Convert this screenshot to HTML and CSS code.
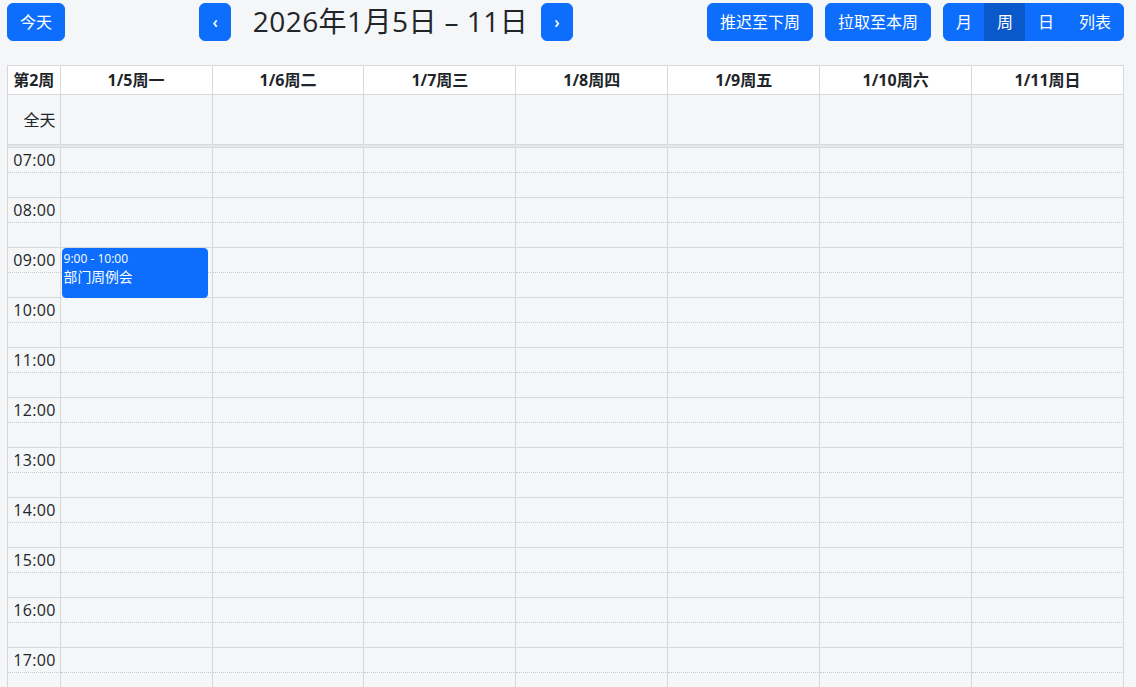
FILE: index.html
```html
<!DOCTYPE html>
<html lang="zh-CN">
<head>
<meta charset="utf-8">
<title>日历</title>
<link rel="stylesheet" href="styles.css">
</head>
<body>
<div class="toolbar">
  <div class="chunk">
    <button class="btn">今天</button>
  </div>
  <div class="chunk">
    <button class="btn nav">‹</button>
    <h2 class="title">2026年1月5日 – 11日</h2>
    <button class="btn nav next">›</button>
  </div>
  <div class="chunk">
    <button class="btn">推迟至下周</button>
    <button class="btn sp">拉取至本周</button>
    <div class="group sp">
      <button class="btn">月</button>
      <button class="btn active">周</button>
      <button class="btn">日</button>
      <button class="btn">列表</button>
    </div>
  </div>
</div>

<div class="cal">
  <div class="row head">
    <div>第2周</div>
    <div>1/5周一</div>
    <div>1/6周二</div>
    <div>1/7周三</div>
    <div>1/8周四</div>
    <div>1/9周五</div>
    <div>1/10周六</div>
    <div>1/11周日</div>
  </div>
  <div class="row allday">
    <div class="axis">全天</div>
    <div></div><div></div><div></div><div></div><div></div><div></div><div></div>
  </div>
  <div class="divider"></div>

  <div class="row slot hour"><div class="axis">07:00</div><div></div><div></div><div></div><div></div><div></div><div></div><div></div></div>
  <div class="row slot half"><div class="axis"></div><div></div><div></div><div></div><div></div><div></div><div></div><div></div></div>
  <div class="row slot hour"><div class="axis">08:00</div><div></div><div></div><div></div><div></div><div></div><div></div><div></div></div>
  <div class="row slot half"><div class="axis"></div><div></div><div></div><div></div><div></div><div></div><div></div><div></div></div>
  <div class="row slot hour"><div class="axis">09:00</div><div class="has-ev"><div class="event"><div class="ev-time">9:00 - 10:00</div><div class="ev-title">部门周例会</div></div></div><div></div><div></div><div></div><div></div><div></div><div></div></div>
  <div class="row slot half"><div class="axis"></div><div></div><div></div><div></div><div></div><div></div><div></div><div></div></div>
  <div class="row slot hour"><div class="axis">10:00</div><div></div><div></div><div></div><div></div><div></div><div></div><div></div></div>
  <div class="row slot half"><div class="axis"></div><div></div><div></div><div></div><div></div><div></div><div></div><div></div></div>
  <div class="row slot hour"><div class="axis">11:00</div><div></div><div></div><div></div><div></div><div></div><div></div><div></div></div>
  <div class="row slot half"><div class="axis"></div><div></div><div></div><div></div><div></div><div></div><div></div><div></div></div>
  <div class="row slot hour"><div class="axis">12:00</div><div></div><div></div><div></div><div></div><div></div><div></div><div></div></div>
  <div class="row slot half"><div class="axis"></div><div></div><div></div><div></div><div></div><div></div><div></div><div></div></div>
  <div class="row slot hour"><div class="axis">13:00</div><div></div><div></div><div></div><div></div><div></div><div></div><div></div></div>
  <div class="row slot half"><div class="axis"></div><div></div><div></div><div></div><div></div><div></div><div></div><div></div></div>
  <div class="row slot hour"><div class="axis">14:00</div><div></div><div></div><div></div><div></div><div></div><div></div><div></div></div>
  <div class="row slot half"><div class="axis"></div><div></div><div></div><div></div><div></div><div></div><div></div><div></div></div>
  <div class="row slot hour"><div class="axis">15:00</div><div></div><div></div><div></div><div></div><div></div><div></div><div></div></div>
  <div class="row slot half"><div class="axis"></div><div></div><div></div><div></div><div></div><div></div><div></div><div></div></div>
  <div class="row slot hour"><div class="axis">16:00</div><div></div><div></div><div></div><div></div><div></div><div></div><div></div></div>
  <div class="row slot half"><div class="axis"></div><div></div><div></div><div></div><div></div><div></div><div></div><div></div></div>
  <div class="row slot hour"><div class="axis">17:00</div><div></div><div></div><div></div><div></div><div></div><div></div><div></div></div>
  <div class="row slot half"><div class="axis"></div><div></div><div></div><div></div><div></div><div></div><div></div><div></div></div>
</div>
</body>
</html>
```

FILE: styles.css
```css
:root {
  --line: #d5d8dc;
  --bg: #f5f6f8;
  --primary: #0d6efd;
  --primary-dark: #0a58ca;
}

html, body {
  margin: 0;
  height: 687px;
  overflow: hidden;
}

body {
  box-sizing: border-box;
  padding: 3px 12px 0 7px;
  background: var(--bg);
  color: #212529;
  font-family: "Open Sans", "Noto Sans CJK SC", sans-serif;
  font-size: 16px;
  line-height: 1.5;
}

.toolbar {
  display: flex;
  justify-content: space-between;
  align-items: center;
  margin-bottom: 24px;
}

.chunk {
  display: flex;
  align-items: center;
}

.btn {
  font: inherit;
  font-family: "Open Sans", "Noto Sans CJK SC", sans-serif;
  line-height: 24px;
  color: #fff;
  background: var(--primary);
  border: 1px solid var(--primary);
  border-radius: 6px;
  padding: 6px 12px;
  margin: 0;
  cursor: pointer;
}

.btn.nav {
  font-weight: 600;
  padding: 6px 12px;
}

.btn.next {
  margin-left: 13px;
}

.sp {
  margin-left: 12px;
}

.title {
  margin: 0 0 0 22px;
  font-size: 28px;
  font-weight: 400;
  line-height: 1.2;
  letter-spacing: 0.45px;
}

.group {
  display: flex;
}

.group .btn {
  border-radius: 0;
}

.group .btn + .btn {
  margin-left: -1px;
}

.group .btn:first-child {
  border-radius: 6px 0 0 6px;
}

.group .btn:last-child {
  border-radius: 0 6px 6px 0;
}

.group .btn.active {
  background: var(--primary-dark);
  border-color: var(--primary-dark);
}

/* calendar grid */
.cal {
  border-top: 1px solid var(--line);
  border-left: 1px solid var(--line);
}

.row {
  display: grid;
  grid-template-columns: 52.6px repeat(7, 1fr);
}

.row > div {
  border-right: 1px solid var(--line);
  border-bottom: 1px solid var(--line);
  min-width: 0;
}

.head > div {
  background: #fff;
  padding: 2px 4px;
  line-height: 24px;
  text-align: center;
  font-weight: 700;
  white-space: nowrap;
}

.head > div:first-child {
  padding: 2px 3px;
}

.allday > div {
  height: 49px;
}

.allday .axis {
  display: flex;
  align-items: center;
  justify-content: flex-end;
  padding-right: 4px;
}

.divider {
  height: 2px;
  background: #e6e8eb;
  border-right: 1px solid var(--line);
  border-bottom: 1px solid var(--line);
}

.slot > div {
  height: 24px;
}

.slot.hour > div {
  border-bottom: 1px dotted #c6c9cd;
}

.slot .axis {
  padding-right: 4px;
  text-align: right;
  line-height: 24px;
  white-space: nowrap;
  letter-spacing: 0.3px;
}

.has-ev {
  position: relative;
}

.event {
  position: absolute;
  top: 0;
  left: 1px;
  right: 4px;
  height: 47px;
  z-index: 2;
  background: var(--primary);
  border: 1px solid var(--primary);
  border-radius: 4px;
  padding: 1px 1px 0;
  color: #fff;
  overflow: hidden;
}

.ev-time {
  font-size: 12px;
  line-height: 17px;
  white-space: nowrap;
}

.ev-title {
  font-size: 13.8px;
  line-height: 20px;
}
```
